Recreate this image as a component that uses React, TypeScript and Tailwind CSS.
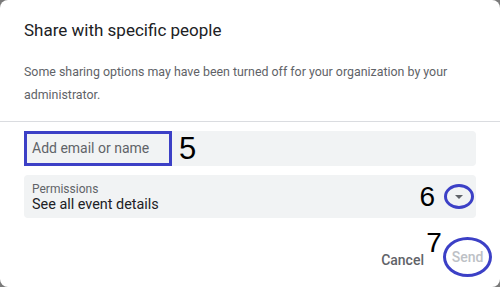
export default function App() {
  return (
    <div className="w-[500px] h-[287px] bg-[#7a7a7a] overflow-hidden" style={{ fontFamily: 'Roboto, "Liberation Sans", sans-serif' }}>
      <div className="h-full w-full bg-white rounded-lg flex flex-col">
        <div className="px-6 pt-[18px] pb-[15px] border-b border-[#dadce0]">
          <h2 className="text-[17px] leading-6 text-[#202124]">Share with specific people</h2>
          <p className="mt-[18px] text-[12.4px] leading-[23px] text-[#5f6368]">
            Some sharing options may have been turned off for your organization by your administrator.
          </p>
        </div>

        <div className="px-6 pt-[9px] flex flex-col gap-[9px]">
          <div className="h-[35px] bg-[#f1f3f4] rounded flex items-center">
            <div className="h-[35px] w-[148px] border-[3px] border-[#3c40c6] flex items-center pl-[5px] text-[14px] text-[#5f6368]">
              Add email or name
            </div>
            <span className="ml-[7px] text-[31px] leading-none text-black" style={{ fontFamily: '"Liberation Sans", sans-serif' }}>5</span>
          </div>

          <div className="h-[43px] bg-[#f1f3f4] rounded flex items-center justify-between pl-2 pr-[2px]">
            <div className="flex flex-col pt-[2px]">
              <span className="text-[12px] leading-[14px] text-[#5f6368]">Permissions</span>
              <span className="text-[14.4px] leading-[18px] text-[#202124]">See all event details</span>
            </div>
            <div className="flex items-center gap-[9px]">
              <span className="text-[28px] leading-none text-black" style={{ fontFamily: '"Liberation Sans", sans-serif' }}>6</span>
              <div className="w-[30px] h-[25px] rounded-[50%] border-[3px] border-[#3c40c6] flex items-center justify-center">
                <svg width="8" height="4" viewBox="0 0 8 4">
                  <path d="M0 0 L8 0 L4 4 Z" fill="#5f6368" />
                </svg>
              </div>
            </div>
          </div>
        </div>

        <div className="flex-1 flex justify-end items-end px-2 pb-[10px]">
          <div className="relative flex items-center">
            <span className="text-[14px] font-medium text-[#5f6368] mr-[19px] mt-[6px]">Cancel</span>
            <span className="absolute left-[45px] -top-[8px] text-[28px] leading-none text-black" style={{ fontFamily: '"Liberation Sans", sans-serif' }}>7</span>
            <div className="w-[49px] h-[40px] rounded-[50%] border-[3px] border-[#3c40c6] flex items-center justify-center text-[14px] font-medium text-[#bdc1c6]">
              Send
            </div>
          </div>
        </div>
      </div>
    </div>
  );
}
